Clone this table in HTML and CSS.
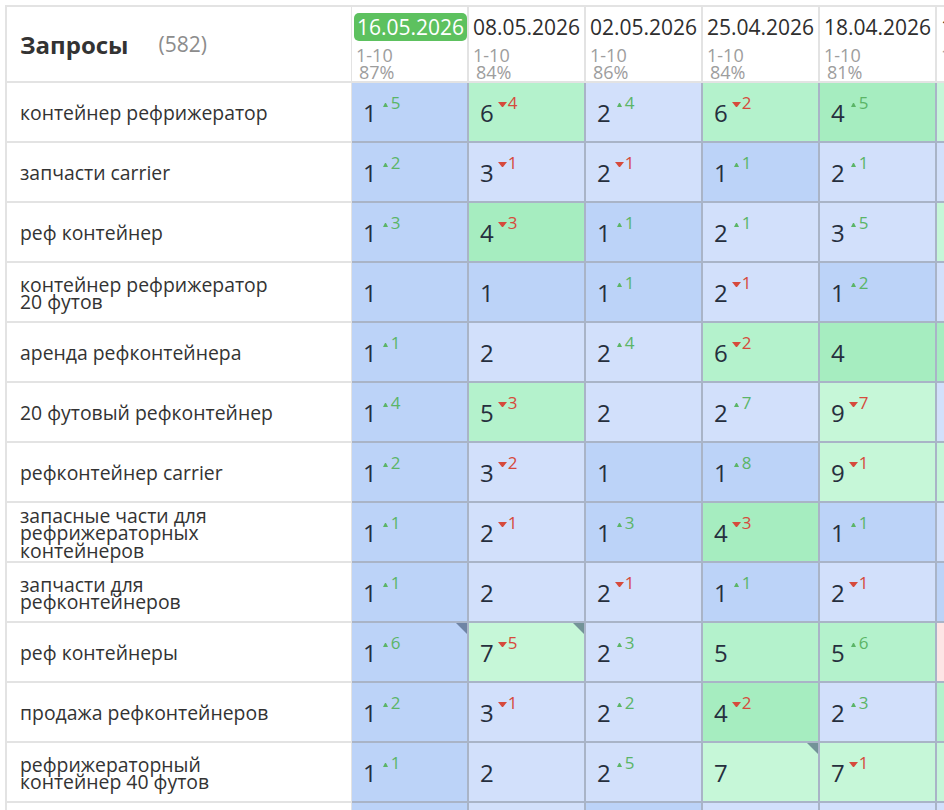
FILE: index.html
```html
<!DOCTYPE html>
<html lang="ru">
<head>
<meta charset="utf-8">
<title>Запросы</title>
<link rel="stylesheet" href="styles.css">
</head>
<body>
<div class="table">
  <div class="row head">
    <div class="label-head"><span class="title">Запросы</span><span class="count">(582)</span></div>
    <div class="date-head"><div class="date"><span class="badge">16.05.2026</span></div><div class="range">1-10</div><div class="pct">87%</div></div>
    <div class="date-head"><div class="date">08.05.2026</div><div class="range">1-10</div><div class="pct">84%</div></div>
    <div class="date-head"><div class="date">02.05.2026</div><div class="range">1-10</div><div class="pct">86%</div></div>
    <div class="date-head"><div class="date">25.04.2026</div><div class="range">1-10</div><div class="pct">84%</div></div>
    <div class="date-head"><div class="date">18.04.2026</div><div class="range">1-10</div><div class="pct">81%</div></div>
    <div class="date-head"><div class="date">11.04.2026</div><div class="range">1-10</div><div class="pct">80%</div></div>
  </div>

  <div class="row">
    <div class="label">контейнер рефрижератор</div>
    <div class="cell v1"><span class="num">1</span><span class="d up">5</span></div>
    <div class="cell v5"><span class="num">6</span><span class="d down">4</span></div>
    <div class="cell v2"><span class="num">2</span><span class="d up">4</span></div>
    <div class="cell v5"><span class="num">6</span><span class="d down">2</span></div>
    <div class="cell v4"><span class="num">4</span><span class="d up">5</span></div>
    <div class="cell v7"><span class="num">9</span></div>
  </div>

  <div class="row">
    <div class="label">запчасти carrier</div>
    <div class="cell v1"><span class="num">1</span><span class="d up">2</span></div>
    <div class="cell v2"><span class="num">3</span><span class="d down">1</span></div>
    <div class="cell v2"><span class="num">2</span><span class="d down">1</span></div>
    <div class="cell v1"><span class="num">1</span><span class="d up">1</span></div>
    <div class="cell v2"><span class="num">2</span><span class="d up">1</span></div>
    <div class="cell v2"><span class="num">3</span></div>
  </div>

  <div class="row">
    <div class="label">реф контейнер</div>
    <div class="cell v1"><span class="num">1</span><span class="d up">3</span></div>
    <div class="cell v4"><span class="num">4</span><span class="d down">3</span></div>
    <div class="cell v1"><span class="num">1</span><span class="d up">1</span></div>
    <div class="cell v2"><span class="num">2</span><span class="d up">1</span></div>
    <div class="cell v2"><span class="num">3</span><span class="d up">5</span></div>
    <div class="cell v7"><span class="num">8</span></div>
  </div>

  <div class="row">
    <div class="label">контейнер рефрижератор<br>20 футов</div>
    <div class="cell v1"><span class="num">1</span></div>
    <div class="cell v1"><span class="num">1</span></div>
    <div class="cell v1"><span class="num">1</span><span class="d up">1</span></div>
    <div class="cell v2"><span class="num">2</span><span class="d down">1</span></div>
    <div class="cell v1"><span class="num">1</span><span class="d up">2</span></div>
    <div class="cell v2"><span class="num">3</span></div>
  </div>

  <div class="row">
    <div class="label">аренда рефконтейнера</div>
    <div class="cell v1"><span class="num">1</span><span class="d up">1</span></div>
    <div class="cell v2"><span class="num">2</span></div>
    <div class="cell v2"><span class="num">2</span><span class="d up">4</span></div>
    <div class="cell v5"><span class="num">6</span><span class="d down">2</span></div>
    <div class="cell v4"><span class="num">4</span></div>
    <div class="cell v4"><span class="num">4</span></div>
  </div>

  <div class="row">
    <div class="label">20 футовый рефконтейнер</div>
    <div class="cell v1"><span class="num">1</span><span class="d up">4</span></div>
    <div class="cell v5"><span class="num">5</span><span class="d down">3</span></div>
    <div class="cell v2"><span class="num">2</span></div>
    <div class="cell v2"><span class="num">2</span><span class="d up">7</span></div>
    <div class="cell v7"><span class="num">9</span><span class="d down">7</span></div>
    <div class="cell v2"><span class="num">2</span></div>
  </div>

  <div class="row">
    <div class="label">рефконтейнер carrier</div>
    <div class="cell v1"><span class="num">1</span><span class="d up">2</span></div>
    <div class="cell v2"><span class="num">3</span><span class="d down">2</span></div>
    <div class="cell v1"><span class="num">1</span></div>
    <div class="cell v1"><span class="num">1</span><span class="d up">8</span></div>
    <div class="cell v7"><span class="num">9</span><span class="d down">1</span></div>
    <div class="cell v7"><span class="num">8</span></div>
  </div>

  <div class="row">
    <div class="label">запасные части для<br>рефрижераторных<br>контейнеров</div>
    <div class="cell v1"><span class="num">1</span><span class="d up">1</span></div>
    <div class="cell v2"><span class="num">2</span><span class="d down">1</span></div>
    <div class="cell v1"><span class="num">1</span><span class="d up">3</span></div>
    <div class="cell v4"><span class="num">4</span><span class="d down">3</span></div>
    <div class="cell v1"><span class="num">1</span><span class="d up">1</span></div>
    <div class="cell v2"><span class="num">2</span></div>
  </div>

  <div class="row">
    <div class="label">запчасти для<br>рефконтейнеров</div>
    <div class="cell v1"><span class="num">1</span><span class="d up">1</span></div>
    <div class="cell v2"><span class="num">2</span></div>
    <div class="cell v2"><span class="num">2</span><span class="d down">1</span></div>
    <div class="cell v1"><span class="num">1</span><span class="d up">1</span></div>
    <div class="cell v2"><span class="num">2</span><span class="d down">1</span></div>
    <div class="cell v1"><span class="num">1</span></div>
  </div>

  <div class="row">
    <div class="label">реф контейнеры</div>
    <div class="cell v1 mark"><span class="num">1</span><span class="d up">6</span></div>
    <div class="cell v7 mark"><span class="num">7</span><span class="d down">5</span></div>
    <div class="cell v2"><span class="num">2</span><span class="d up">3</span></div>
    <div class="cell v5"><span class="num">5</span></div>
    <div class="cell v5"><span class="num">5</span><span class="d up">6</span></div>
    <div class="cell vp"><span class="num">11</span></div>
  </div>

  <div class="row">
    <div class="label">продажа рефконтейнеров</div>
    <div class="cell v1"><span class="num">1</span><span class="d up">2</span></div>
    <div class="cell v2"><span class="num">3</span><span class="d down">1</span></div>
    <div class="cell v2"><span class="num">2</span><span class="d up">2</span></div>
    <div class="cell v4"><span class="num">4</span><span class="d down">2</span></div>
    <div class="cell v2"><span class="num">2</span><span class="d up">3</span></div>
    <div class="cell v5"><span class="num">5</span></div>
  </div>

  <div class="row">
    <div class="label">рефрижераторный<br>контейнер 40 футов</div>
    <div class="cell v1"><span class="num">1</span><span class="d up">1</span></div>
    <div class="cell v2"><span class="num">2</span></div>
    <div class="cell v2"><span class="num">2</span><span class="d up">5</span></div>
    <div class="cell v7 mark"><span class="num">7</span></div>
    <div class="cell v7"><span class="num">7</span><span class="d down">1</span></div>
    <div class="cell v7"><span class="num">8</span></div>
  </div>

  <div class="row">
    <div class="label">рефконтейнер 40 футов</div>
    <div class="cell v1"><span class="num">1</span></div>
    <div class="cell v2"><span class="num">2</span></div>
    <div class="cell v1"><span class="num">1</span></div>
    <div class="cell v2"><span class="num">3</span></div>
    <div class="cell v2"><span class="num">2</span></div>
    <div class="cell v2"><span class="num">2</span></div>
  </div>
</div>
</body>
</html>
```

FILE: styles.css
```css
html, body {
  margin: 0;
  padding: 0;
  background: #ffffff;
  overflow: hidden;
}

body {
  font-family: "Open Sans", "Liberation Sans", sans-serif;
  color: #333333;
}

.table {
  margin: 5px 0 0 5px;
  width: 939px;
  overflow: hidden;
  border-top: 2px solid #e3e3e3;
  border-left: 2px solid #e3e3e3;
}

.row {
  display: grid;
  grid-template-columns: 345px repeat(6, 117px);
  height: 60px;
}

.row.head {
  height: 76px;
}

.label-head {
  box-sizing: border-box;
  display: flex;
  align-items: center;
  padding-left: 13px;
  border-bottom: 2px solid #e3e3e3;
  border-right: 1px solid #e3e3e3;
}

.title {
  font-size: 24px;
  font-weight: 700;
  color: #333333;
}

.count {
  margin-left: 30px;
  font-size: 21px;
  color: #8c8c8c;
}

.date-head {
  box-sizing: border-box;
  padding: 6px 0 0 4px;
  border-bottom: 2px solid #e3e3e3;
  border-right: 2px solid #e3e3e3;
  white-space: nowrap;
  overflow: hidden;
}

.date {
  font-size: 21px;
  line-height: 28px;
  color: #2e2e2e;
}

.badge {
  display: inline-block;
  margin-left: -2px;
  padding: 0 3px;
  background: #5dc15f;
  color: #ffffff;
  border-radius: 5px;
}

.range,
.pct {
  font-size: 18px;
  line-height: 17px;
  color: #9d9d9d;
}

.range {
  margin-top: 6px;
}

.pct {
  padding-left: 3px;
}

.label {
  box-sizing: border-box;
  display: flex;
  align-items: center;
  padding: 2px 0 0 13px;
  font-size: 19.4px;
  line-height: 17.5px;
  color: #333333;
  border-bottom: 2px solid #e3e3e3;
  border-right: 1px solid #e3e3e3;
}

.cell {
  position: relative;
  box-sizing: border-box;
  display: flex;
  align-items: center;
  padding: 2px 0 0 11px;
  border-bottom: 2px solid #a9b4c7;
  border-right: 2px solid #a9b4c7;
  white-space: nowrap;
  overflow: hidden;
}

.v1 { background: #bcd3f8; }
.v2 { background: #d2e0fb; }
.v4 { background: #a6edc0; }
.v5 { background: #b4f2cc; }
.v7 { background: #c6f7d8; }
.vp { background: #fde5e5; }

.num {
  font-size: 24px;
  line-height: 30px;
  color: #262f3e;
}

.d {
  display: inline-flex;
  align-items: flex-end;
  align-self: flex-start;
  margin-top: 9px;
  font-size: 17px;
  line-height: 18px;
}

.d::before {
  content: "";
  display: block;
  box-sizing: border-box;
  margin-bottom: 5px;
}

.up {
  color: #5bb567;
}

.up::before {
  width: 5px;
  margin-left: 6px;
  margin-right: 3px;
  border-left: 2.5px solid transparent;
  border-right: 2.5px solid transparent;
  border-bottom: 4px solid #5bb567;
}

.down {
  color: #d64a3c;
}

.down::before {
  width: 9px;
  margin-left: 4px;
  margin-right: 1px;
  border-left: 4.5px solid transparent;
  border-right: 4.5px solid transparent;
  border-top: 5px solid #d64a3c;
}

.mark::after {
  content: "";
  position: absolute;
  top: 0;
  right: 0;
  border-top: 11px solid rgba(60, 80, 110, 0.6);
  border-left: 11px solid transparent;
}
```
